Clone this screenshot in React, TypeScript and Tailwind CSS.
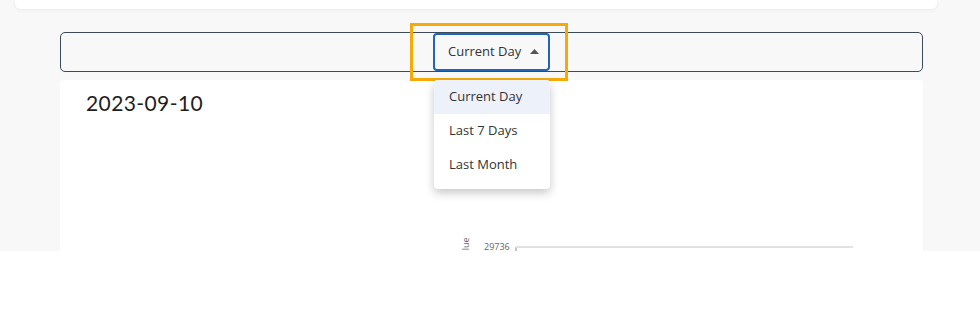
import React from "react";

const options = ["Current Day", "Last 7 Days", "Last Month"];

const RangeSelect = () => {
  const selected = "Current Day";

  return (
    <div className="relative">
      {/* highlight frame drawn over the control */}
      <div className="pointer-events-none absolute left-[-23px] top-[-11px] w-[158px] h-[58px] border-[3px] border-[#f5aa0a] z-10"></div>
      <button
        type="button"
        className="flex items-center gap-[9px] h-[38px] w-[117px] pl-[13px] border-2 border-[#2264b6] rounded-[4px] bg-[#f8f8f8] text-[13px] text-[#333] mt-[-1px]"
      >
        <span>{selected}</span>
        <svg width="9" height="5" viewBox="0 0 9 5">
          <path d="M0 5 L4.5 0 L9 5 Z" fill="#555" />
        </svg>
      </button>

      {/* open menu */}
      <ul className="absolute left-[1px] top-[46px] w-[116px] bg-white rounded-[4px] shadow-[0_4px_10px_rgba(0,0,0,0.22)] pb-[7px] z-20 overflow-hidden">
        {options.map((opt) => (
          <li
            key={opt}
            className={
              opt === selected
                ? "h-[34px] flex items-center px-[15px] text-[13px] text-[#333] bg-[#edf2fa]"
                : "h-[34px] flex items-center px-[15px] text-[13px] text-[#333]"
            }
          >
            {opt}
          </li>
        ))}
      </ul>
    </div>
  );
};

export default function App() {
  return (
    <div className="font-['Open_Sans',sans-serif]">
      <div className="bg-[#f8f8f8] h-[251px] overflow-hidden">
        {/* header card */}
        <div className="ml-[15px] w-[922px] h-[9px] bg-white rounded-b-[6px] shadow-[0_1px_4px_rgba(0,0,0,0.06)]"></div>

        {/* filter bar */}
        <div className="mt-[23px] ml-[60px] w-[863px] h-[40px] border border-[#3b4b5a] rounded-[5px] flex justify-center items-center">
          <RangeSelect />
        </div>

        {/* chart card */}
        <div className="mt-[8px] ml-[60px] w-[863px] h-[200px] bg-white rounded-t-[4px]">
          <h2 className="pt-[7px] pl-[26px] text-[21px] text-[#1e1e1e] font-['Lato',sans-serif] tracking-[0.4px]">
            2023-09-10
          </h2>
          <div className="pl-[400px] pt-[117px]">
            <svg width="400" height="30" viewBox="0 0 400 30">
              <text
                x="0"
                y="0"
                fontSize="9"
                fill="#666"
                transform="translate(9 13) rotate(-90)"
                fontFamily="Open Sans, sans-serif"
                textAnchor="middle"
              >
                Value
              </text>
              <text x="24" y="14" fontSize="9" fill="#666" fontFamily="Open Sans, sans-serif">
                29736
              </text>
              <line x1="56" y1="11" x2="56" y2="16" stroke="#888" strokeWidth="1" />
              <line x1="56" y1="11" x2="393" y2="11" stroke="#e2e2e2" strokeWidth="2" />
            </svg>
          </div>
        </div>
      </div>
    </div>
  );
}
